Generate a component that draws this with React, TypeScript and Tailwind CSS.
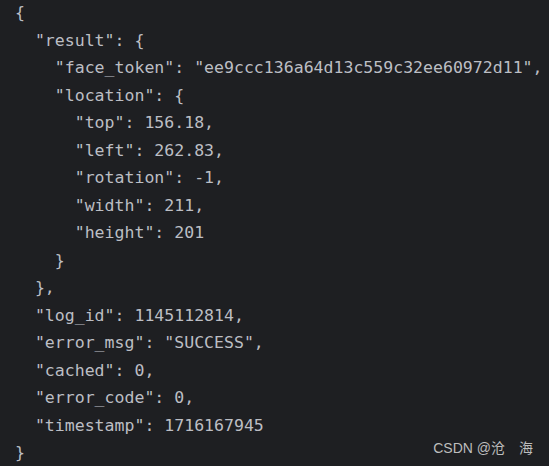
import React from 'react';

const lines: string[] = [
  '{',
  '  "result": {',
  '    "face_token": "ee9ccc136a64d13c559c32ee60972d11",',
  '    "location": {',
  '      "top": 156.18,',
  '      "left": 262.83,',
  '      "rotation": -1,',
  '      "width": 211,',
  '      "height": 201',
  '    }',
  '  },',
  '  "log_id": 1145112814,',
  '  "error_msg": "SUCCESS",',
  '  "cached": 0,',
  '  "error_code": 0,',
  '  "timestamp": 1716167945',
  '}',
];

export default function App() {
  return (
    <div className="relative w-[549px] h-[466px] overflow-hidden bg-[#1e1f22]">
      <div className="pl-[15px] -mt-[1px] flex flex-col items-start text-[16.55px] leading-[27.5px] text-[#bcbec4] font-['DejaVu_Sans_Mono','Liberation_Mono',monospace]">
        {lines.map((l, i) => (
          <span key={i} className="whitespace-pre">
            {l}
          </span>
        ))}
      </div>
      <div className="absolute right-[16px] bottom-[10px] text-[14px] leading-[16px] text-[#bdbdbd] font-['Liberation_Sans','Noto_Sans_CJK_SC',sans-serif] whitespace-pre">
        CSDN @沧　海
      </div>
    </div>
  );
}
